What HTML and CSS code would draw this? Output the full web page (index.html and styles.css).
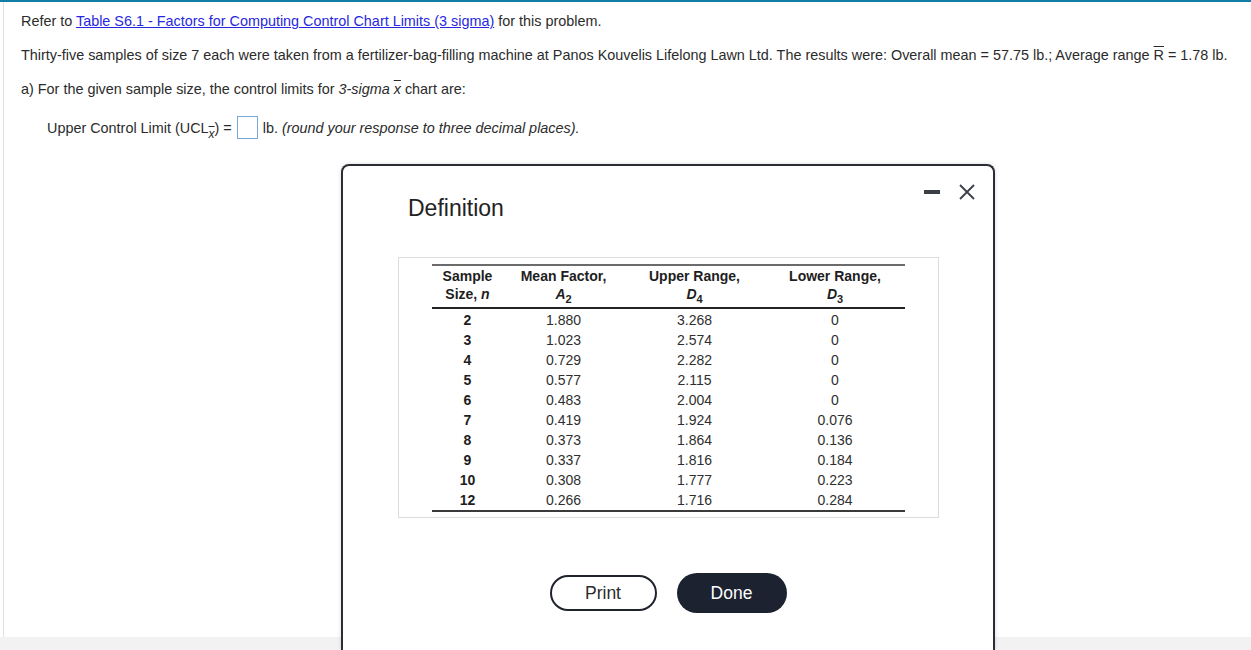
FILE: index.html
```html
<!DOCTYPE html>
<html>
<head>
<meta charset="utf-8">
<link rel="stylesheet" href="styles.css">
</head>
<body>
<div class="page">
  <div class="topbar"></div>
  <div class="content">
    <p class="line first">Refer to <a class="link" href="#">Table S6.1 - Factors for Computing Control Chart Limits (3 sigma)</a> for this problem.</p>
    <p class="line">Thirty-five samples of size 7 each were taken from a fertilizer-bag-filling machine at Panos Kouvelis Lifelong Lawn Ltd. The results were: Overall mean = 57.75 lb.; Average range <span class="over">R</span> = 1.78 lb.</p>
    <p class="line">a) For the given sample size, the control limits for <i>3-sigma</i> <i class="over">x</i> chart are:</p>
    <p class="line ucl">Upper Control Limit (UCL<sub class="sub"><i class="over">x</i></sub>) = <span class="answer"></span> lb. <i>(round your response to three decimal places).</i></p>
  </div>
  <div class="footer"></div>
</div>

<div class="modal">
  <div class="modal-controls">
    <span class="minimize"></span>
    <svg class="close" width="16" height="16" viewBox="0 0 16 16"><path d="M1 1 L15 15 M15 1 L1 15" stroke="#3a3f47" stroke-width="1.8" fill="none"/></svg>
  </div>
  <h2 class="modal-title">Definition</h2>
  <div class="table-box">
    <table class="factors">
      <thead>
        <tr>
          <th class="c1">Sample<br>Size, <i>n</i></th>
          <th class="c2">Mean Factor,<br><i>A</i><sub>2</sub></th>
          <th class="c3">Upper Range,<br><i>D</i><sub>4</sub></th>
          <th class="c4">Lower Range,<br><i>D</i><sub>3</sub></th>
        </tr>
      </thead>
      <tbody>
        <tr class="r-first"><td class="n">2</td><td>1.880</td><td>3.268</td><td>0</td></tr>
        <tr><td class="n">3</td><td>1.023</td><td>2.574</td><td>0</td></tr>
        <tr><td class="n">4</td><td>0.729</td><td>2.282</td><td>0</td></tr>
        <tr><td class="n">5</td><td>0.577</td><td>2.115</td><td>0</td></tr>
        <tr><td class="n">6</td><td>0.483</td><td>2.004</td><td>0</td></tr>
        <tr><td class="n">7</td><td>0.419</td><td>1.924</td><td>0.076</td></tr>
        <tr><td class="n">8</td><td>0.373</td><td>1.864</td><td>0.136</td></tr>
        <tr><td class="n">9</td><td>0.337</td><td>1.816</td><td>0.184</td></tr>
        <tr><td class="n">10</td><td>0.308</td><td>1.777</td><td>0.223</td></tr>
        <tr class="r-last"><td class="n">12</td><td>0.266</td><td>1.716</td><td>0.284</td></tr>
      </tbody>
    </table>
  </div>
  <div class="buttons">
    <button class="btn print">Print</button>
    <button class="btn done">Done</button>
  </div>
</div>
</body>
</html>
```

FILE: styles.css
```css
html, body {
  margin: 0;
  padding: 0;
  height: 100%;
  overflow: hidden;
  background: #ffffff;
  font-family: "Liberation Sans", Arial, sans-serif;
  color: #2b2b2b;
}

.page {
  display: flex;
  flex-direction: column;
  height: 650px;
}

.topbar {
  height: 2px;
  background: #137ea3;
  flex: none;
}

.content {
  flex: 1;
  margin-left: 3px;
  border-left: 1px solid #dde2ea;
  padding-left: 17px;
}

.footer {
  height: 13px;
  background: #f2f2f2;
  flex: none;
}

.line {
  margin: 0;
  font-size: 14.4px;
  line-height: 18px;
  white-space: nowrap;
}

.line.first { margin-top: 10px; }
.line + .line { margin-top: 16px; }
.line.ucl {
  margin-top: 18px;
  padding-left: 26px;
}

.link {
  color: #2727e0;
  text-decoration: underline;
}

.over {
  text-decoration: overline;
}

.sub {
  font-size: 12px;
  vertical-align: -5px;
  line-height: 0;
}

.answer {
  display: inline-block;
  width: 19px;
  height: 21px;
  border: 1px solid #7aa7d9;
  vertical-align: -6px;
  margin: 0 1px;
}

/* Modal dialog overlaying the page; its lower part runs past the window */
.modal {
  position: absolute;
  left: 341px;
  top: 164px;
  width: 650px;
  height: 484px;
  border: 2px solid #2a2d33;
  border-bottom: none;
  border-radius: 8px 8px 0 0;
  background: #ffffff;
  box-shadow: 0 0 4px rgba(0,0,0,0.15);
}

.modal-controls {
  position: absolute;
  top: 18px;
  right: 18px;
  display: flex;
  align-items: center;
  gap: 19px;
}

.minimize {
  display: block;
  width: 16px;
  height: 4px;
  background: #3a3f47;
}

.close { display: block; }

.modal-title {
  margin: 29px 0 0 65px;
  font-size: 23px;
  font-weight: normal;
  line-height: 26px;
  color: #222;
}

.table-box {
  width: 539px;
  margin: 36px auto 0;
  border: 1px solid #dcdcdc;
  padding: 6px 0 5px;
}

.factors {
  width: 473px;
  margin: 0 auto;
  border-collapse: collapse;
  font-size: 14px;
  color: #2f2f2f;
  border-top: 2px solid #6b6b6b;
  border-bottom: 2px solid #3a3a3a;
}

.factors th {
  font-weight: bold;
  line-height: 18px;
  padding: 1px 0 4px;
  border-bottom: 2px solid #222;
  color: #1e1e1e;
  vertical-align: top;
}

.factors th sub {
  font-size: 11px;
  line-height: 0;
}

.c1 { width: 72px; }
.c2 { width: 120px; }
.c3 { width: 142px; }
.c4 { width: 139px; }

.factors td {
  text-align: center;
  line-height: 20px;
  padding: 0;
}

.factors td.n {
  font-weight: bold;
  color: #1e1e1e;
}

.factors tr.r-first td { padding-top: 1px; }
.factors tr.r-last td { padding-bottom: 0; }

.buttons {
  display: flex;
  justify-content: center;
  align-items: center;
  gap: 20px;
  margin-top: 55px;
}

.btn {
  font-family: "Liberation Sans", Arial, sans-serif;
  font-size: 17.5px;
  border-radius: 20px;
  cursor: pointer;
}

.print {
  width: 107px;
  height: 36px;
  background: #ffffff;
  border: 2px solid #1f232b;
  color: #2b2b2b;
}

.done {
  width: 110px;
  height: 40px;
  background: #1c2230;
  border: none;
  color: #ffffff;
}
```
